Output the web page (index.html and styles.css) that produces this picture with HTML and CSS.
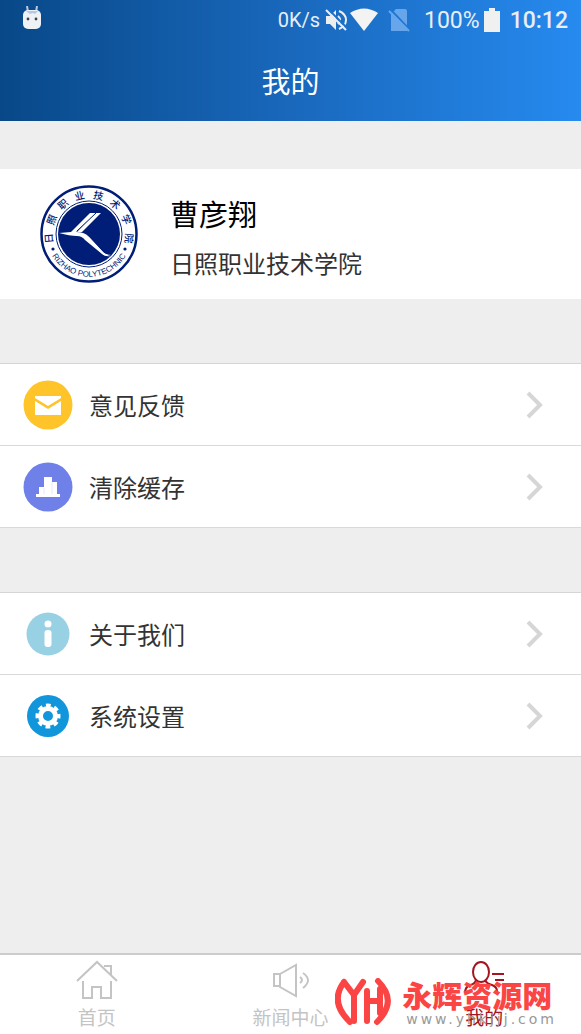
FILE: index.html
```
<!DOCTYPE html>
<html lang="zh-CN">
<head>
    <meta charset="UTF-8">
    <meta name="viewport" content="width=device-width, initial-scale=1.0">
    <title>我的</title>
    <link rel="stylesheet" href="styles.css">
</head>
<body>
    <!-- 顶部 -->
    <header class="header">
        <div class="status-bar">
            <svg class="robot" width="20" height="24" viewBox="0 0 20 24">
                <path d="M5 0l1 6M15 0l-1 6" stroke="#b8cce4" stroke-width="2"/>
                <rect x="1" y="4" width="18" height="19" rx="5" fill="#eef1f5"/>
                <path d="M4 5h12l-3 3-2-1-3 1z" fill="#b9c8de"/>
                <circle cx="6" cy="13" r="1.4" fill="#444"/>
                <circle cx="14" cy="13" r="1.4" fill="#444"/>
            </svg>
            <span class="speed">0K/s</span>
            <svg width="22" height="22" viewBox="0 0 22 22">
                <path d="M1 7h4l6-6v20l-6-6H1z" fill="#eee"/>
                <path d="M13 7q4 4 0 8M14 2q7 3 7 9t-7 9" fill="none" stroke="#eee" stroke-width="2"/>
                <path d="M3 0l19 19" stroke="#1d70c9" stroke-width="2"/>
                <path d="M1 1l20 20" stroke="#eee" stroke-width="2"/>
            </svg>
            <svg class="wifi" width="28" height="24" viewBox="0 0 28 24">
                <path d="M0 5q14-9 28 0L14 23z" fill="#f3f3f3"/>
            </svg>
            <svg class="sim" width="22" height="24" viewBox="0 0 22 24">
                <path d="M8 1h9q2 0 2 2v20H3V6z" fill="#67a6ea"/>
                <path d="M3 2l19 20" stroke="#1f77d4" stroke-width="2"/>
                <path d="M1 3l20 20" stroke="#67a6ea" stroke-width="2"/>
            </svg>
            <span class="percent">100%</span>
            <svg class="battery" width="16" height="24" viewBox="0 0 16 24">
                <path d="M5 0h6v3h5v21H0V3h5z" fill="#f0f0f0"/>
            </svg>
            <span class="clock">10:12</span>
        </div>
        <h1>我的</h1>
    </header>

    <main class="content">
        <!-- 个人信息 -->
        <section class="profile">
            <svg class="seal" width="98" height="98" viewBox="0 0 98 98">
                <defs>
                    <path id="arc-top" d="M15 63A36.500 36.500 0 1 1 83 63"/>
                    <path id="arc-bottom" d="M7 58A43 43 0 0 0 91 58"/>
                </defs>
                <circle cx="49" cy="49" r="47.5" fill="#fff" stroke="#001d78" stroke-width="2.5"/>
                <circle cx="49" cy="49" r="33" fill="#fff" stroke="#001d78" stroke-width="1"/>
                <circle cx="49" cy="49" r="31" fill="#001d78"/>
                <path d="M19 48l12-1 19-19h6L36 47q9 0 13 5l13 14q3 4 9 5-6 1-9-2L45 55q-3-4-8-4-7 0-18-3z" fill="#fff"/>
                <path d="M55 28h6L42 47h-5zM49 52l13 14q3 4 10 4h-8L45 50z" fill="#fff"/>
                <path d="M56 28L37 46" stroke="#001d78" stroke-width="1"/>
                <circle cx="13" cy="64" r="1.6" fill="#001d78"/>
                <circle cx="85" cy="64" r="1.6" fill="#001d78"/>
                <text class="seal-cn" text-anchor="middle"><textPath href="#arc-top" startOffset="50%">日&#8194; 照&#8194; 职&#8194; 业&#8194; 技&#8194; 术&#8194; 学&#8194; 院</textPath></text>
                <text class="seal-en" text-anchor="middle"><textPath href="#arc-bottom" startOffset="50%">RIZHAO POLYTECHNIC</textPath></text>
            </svg>
            <div class="profile-info">
                <h2>曹彦翔</h2>
                <p>日照职业技术学院</p>
            </div>
        </section>

        <!-- 功能列表 -->
        <nav class="menu">
            <a href="#">
                <svg class="icon" width="50" height="50" viewBox="0 0 50 50">
                    <circle cx="25" cy="25" r="24.5" fill="#fec42a"/>
                    <path d="M12 16h26v2l-13 8-13-8zM12 21l13 8 13-8v14H12z" fill="#fff"/>
                </svg>
                <span>意见反馈</span>
                <svg class="arrow" width="18" height="30" viewBox="0 0 18 30"><path d="M3 3l12 12L3 27"/></svg>
            </a>
            <a href="#">
                <svg class="icon" width="50" height="50" viewBox="0 0 50 50">
                    <circle cx="25" cy="25" r="24.5" fill="#6f80e8"/>
                    <path d="M13 32h3v-7h5V15h8v5h5v12h3v3H13z" fill="#fff"/>
                    <path d="M21 26v6M29 20v12" stroke="#e3e6fb" stroke-width="1"/>
                </svg>
                <span>清除缓存</span>
                <svg class="arrow" width="18" height="30" viewBox="0 0 18 30"><path d="M3 3l12 12L3 27"/></svg>
            </a>
        </nav>

        <nav class="menu">
            <a href="#">
                <svg class="icon" width="50" height="50" viewBox="0 0 50 50">
                    <circle cx="25" cy="25" r="21.5" fill="#98d0e4"/>
                    <circle cx="25" cy="15" r="3.5" fill="#fff"/>
                    <rect x="21.5" y="21" width="7" height="17" rx="3" fill="#fff"/>
                </svg>
                <span>关于我们</span>
                <svg class="arrow" width="18" height="30" viewBox="0 0 18 30"><path d="M3 3l12 12L3 27"/></svg>
            </a>
            <a href="#">
                <svg class="icon" width="50" height="50" viewBox="0 0 50 50">
                    <circle cx="25" cy="25" r="21" fill="#1296db"/>
                    <circle cx="25" cy="25" r="7.5" fill="none" stroke="#fff" stroke-width="5"/>
                    <circle cx="25" cy="25" r="10.5" fill="none" stroke="#fff" stroke-width="4" stroke-dasharray="4.6 3.647" stroke-dashoffset="2.3"/>
                </svg>
                <span>系统设置</span>
                <svg class="arrow" width="18" height="30" viewBox="0 0 18 30"><path d="M3 3l12 12L3 27"/></svg>
            </a>
        </nav>
    </main>

    <!-- 底部导航 -->
    <footer class="tab-bar">
        <a href="#">
            <svg width="42" height="40" viewBox="0 0 42 40">
                <path d="M1 21L21 2l20 19M7 21v17h9V27h9v11h10V21M28 6h7v9"/>
            </svg>
            <span>首页</span>
        </a>
        <a href="#">
            <svg width="42" height="40" viewBox="0 0 42 40">
                <path d="M10 14H4v12h6M10 14l16-9v31l-16-9zM30 17q4 3 0 6M33 13q10 7 0 15"/>
            </svg>
            <span>新闻中心</span>
        </a>
        <a href="#" class="active">
            <svg width="42" height="40" viewBox="0 0 42 40">
                <ellipse cx="18" cy="12" rx="8" ry="10"/>
                <path d="M13 20q-1 4-6 5-5 2-5 8M22 20q2 4 7 5 5 2 5 6M29 14h12M32 20h9"/>
            </svg>
            <span>我的</span>
        </a>
        <div class="watermark">
            <svg width="56" height="48" viewBox="0 0 56 48">
                <path d="M9 4Q-6 24 15 44M9 4l10 13 9-13M19 15v28M32 13v30M32 23h13M43 3q20 20-1 41M45 11v24"/>
            </svg>
            <div class="watermark-text">
                <strong>永辉资源网</strong>
                <span>www.yhkjjj.com</span>
            </div>
        </div>
    </footer>
</body>
</html>
```
FILE: styles.css
```
* {
    margin: 0;
    padding: 0;
    box-sizing: border-box;
}

body {
    min-height: 100vh;
    display: flex;
    flex-direction: column;
    background-color: #eee;
    font-family: "Noto Sans CJK SC", sans-serif;
    color: #333;
}

a {
    color: inherit;
    text-decoration: none;
}

/* 顶部 */
.header {
    background: linear-gradient(90deg, #084888, #1968bc 50%, #268aef);
    color: #fff;
}

.status-bar {
    height: 40px;
    padding: 0 13px 0 22px;
    display: flex;
    align-items: center;
    font-family: Roboto, sans-serif;
    color: #e8eef6;
}

.status-bar .robot {
    margin: 0 auto 4px 0;
}

.status-bar .speed {
    font-size: 20px;
    margin-right: 5px;
}

.status-bar .wifi {
    margin-left: 3px;
}

.status-bar .sim {
    margin-left: 10px;
}

.status-bar .percent {
    font-size: 23px;
    margin-left: 14px;
}

.status-bar .battery {
    margin: 0 10px 0 4px;
}

.status-bar .clock {
    font-size: 23px;
    font-weight: 500;
}

.header h1 {
    height: 81px;
    line-height: 81px;
    text-align: center;
    font-size: 29px;
    font-weight: 400;
}

.content {
    flex: 1;
}

/* 个人信息 */
.profile {
    margin-top: 48px;
    padding: 16px 40px;
    display: flex;
    align-items: center;
    gap: 32px;
    background-color: #fff;
}

.profile-info {
    padding-top: 4px;
}

.profile h2 {
    margin-bottom: 6px;
    font-size: 29px;
    line-height: 48px;
    font-weight: 400;
    color: #000;
}

.profile p {
    font-size: 24px;
    line-height: 40px;
}

.seal text {
    fill: #001d78;
}

.seal-cn {
    font-size: 10px;
    font-weight: 500;
}

.seal-en {
    font-family: "Liberation Sans", sans-serif;
    font-size: 8px;
}

/* 功能列表 */
.menu {
    margin-top: 64px;
    background-color: #fff;
    border-top: 1px solid #d5d5d5;
}

.menu a {
    height: 82px;
    padding: 0 38px 0 23px;
    display: flex;
    align-items: center;
    border-bottom: 1px solid #d9d9d9;
}

.menu span {
    flex: 1;
    margin-left: 16px;
    font-size: 24px;
}

.arrow path {
    fill: none;
    stroke: #d6d6d6;
    stroke-width: 4;
}

/* 底部导航 */
.tab-bar {
    position: relative;
    height: 81px;
    padding-top: 5px;
    display: flex;
    background-color: #fff;
    border-top: 2px solid #ccc;
}

.tab-bar a {
    flex: 1;
    display: flex;
    flex-direction: column;
    align-items: center;
    font-size: 19px;
    line-height: 34px;
    color: #c4c4c4;
}

.tab-bar a svg {
    fill: none;
    stroke: currentColor;
    stroke-width: 2;
}

.tab-bar .active {
    color: #a51420;
}

/* 水印 */
.watermark {
    position: absolute;
    right: 24px;
    bottom: 7px;
    display: flex;
    align-items: center;
    gap: 11px;
}

.watermark svg {
    fill: none;
    stroke: #fb4545;
    stroke-width: 6;
    stroke-linecap: round;
}

.watermark-text {
    display: flex;
    flex-direction: column;
}

.watermark strong {
    font-size: 30px;
    line-height: 34px;
    font-weight: 900;
    color: #fb4545;
}

.watermark span {
    margin-left: 4px;
    font-family: "DejaVu Sans", sans-serif;
    font-size: 14px;
    line-height: 16px;
    letter-spacing: 3px;
    color: #999;
}
```
